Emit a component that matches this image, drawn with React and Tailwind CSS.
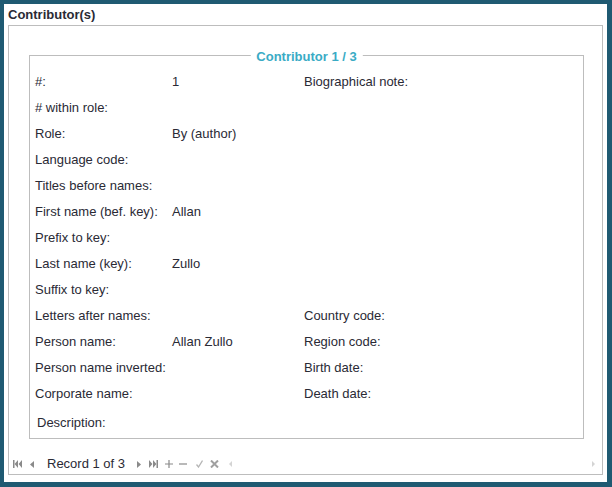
const rows = [
    ['#:', '1', 'Biographical note:'],
    ['# within role:', '', ''],
    ['Role:', 'By (author)', ''],
    ['Language code:', '', ''],
    ['Titles before names:', '', ''],
    ['First name (bef. key):', 'Allan', ''],
    ['Prefix to key:', '', ''],
    ['Last name (key):', 'Zullo', ''],
    ['Suffix to key:', '', ''],
    ['Letters after names:', '', 'Country code:'],
    ['Person name:', 'Allan Zullo', 'Region code:'],
    ['Person name inverted:', '', 'Birth date:'],
    ['Corporate name:', '', 'Death date:'],
];

function Pager() {
    return (
        <div className="mt-auto -ml-[20px] -mr-[18px] h-[20px] flex items-center pl-[4px] pr-[7px] text-[13px] text-[#2a2a35]">
            {/* first */}
            <svg width="9" height="8" viewBox="0 0 9 8" className="fill-[#8a8a8a]">
                <rect x="0" y="0" width="1.5" height="8" />
                <path d="M5 0 L1.6 4 L5 8Z M9 0 L5.6 4 L9 8Z" />
            </svg>
            {/* prev */}
            <svg width="4" height="7" viewBox="0 0 4 7" className="ml-[8px] fill-[#8a8a8a]">
                <path d="M4 0 L0 3.5 L4 7Z" />
            </svg>
            <span className="ml-[13px] leading-[20px]">Record 1 of 3</span>
            {/* next */}
            <svg width="4" height="7" viewBox="0 0 4 7" className="ml-[12px] fill-[#8a8a8a]">
                <path d="M0 0 L4 3.5 L0 7Z" />
            </svg>
            {/* last */}
            <svg width="9" height="8" viewBox="0 0 9 8" className="ml-[8px] fill-[#8a8a8a]">
                <path d="M0 0 L3.4 4 L0 8Z M4 0 L7.4 4 L4 8Z" />
                <rect x="7.5" y="0" width="1.5" height="8" />
            </svg>
            {/* add */}
            <svg width="8" height="8" viewBox="0 0 8 8" className="ml-[7px] stroke-[#8a8a8a]" strokeWidth="1.2">
                <path d="M4 0 V8 M0 4 H8" />
            </svg>
            {/* remove */}
            <svg width="8" height="8" viewBox="0 0 8 8" className="ml-[6px] stroke-[#8a8a8a]" strokeWidth="1.2">
                <path d="M0 4 H8" />
            </svg>
            {/* apply */}
            <svg width="7" height="8" viewBox="0 0 7 8" className="ml-[9px] stroke-[#b5b5b5] fill-none" strokeWidth="1.3">
                <path d="M0.5 4.5 L2.5 7 L6.5 0.5" />
            </svg>
            {/* cancel */}
            <svg width="9" height="8" viewBox="0 0 9 8" className="ml-[7px] stroke-[#a0a0a0]" strokeWidth="2">
                <path d="M1 0.5 L8 7.5 M8 0.5 L1 7.5" />
            </svg>
            <svg width="3" height="6" viewBox="0 0 3 6" className="ml-[10px] fill-[#d4d4d4]">
                <path d="M3 0 L0 3 L3 6Z" />
            </svg>
            <svg width="3" height="6" viewBox="0 0 3 6" className="ml-auto fill-[#d4d4d4]">
                <path d="M0 0 L3 3 L0 6Z" />
            </svg>
        </div>
    );
}

export default function App() {
    return (
        <div className="w-[612px] h-[487px] bg-[#1f5a72] pt-[4px] pl-[4px] pr-[5px] pb-[5px] font-['Liberation_Sans',Arial,sans-serif]">
            <div className="h-full bg-white pl-[4px] pr-[4px] pb-[7px] flex flex-col">
                <div className="h-[21px] leading-[22px] text-[13px] font-bold text-[#2a2a35]">Contributor(s)</div>

                <div className="flex-1 border border-[#bdbdbd] pt-[29px] pl-[20px] pr-[18px] flex flex-col">
                    <div className="relative h-[384px] border border-[#bdbdbd] pt-[13px] pl-[5px] text-[13px] text-[#2a2a35]">
                        <span className="absolute -top-[7px] left-1/2 -translate-x-1/2 bg-white px-[6px] leading-[16px] font-bold text-[#3aabc5]">
                            Contributor 1 / 3
                        </span>

                        <div className="grid grid-cols-[137px_132px_1fr]">
                            {rows.map(([label, value, right], i) => (
                                <div key={i} className="contents">
                                    <div className="h-[26px] leading-[26px] whitespace-nowrap">{label}</div>
                                    <div className="h-[26px] leading-[26px] whitespace-nowrap">{value}</div>
                                    <div className="h-[26px] leading-[26px] whitespace-nowrap">{right}</div>
                                </div>
                            ))}
                        </div>
                        <div className="mt-[3px] pl-[2px] h-[26px] leading-[26px]">Description:</div>
                    </div>

                    <Pager />
                </div>
            </div>
        </div>
    );
}
